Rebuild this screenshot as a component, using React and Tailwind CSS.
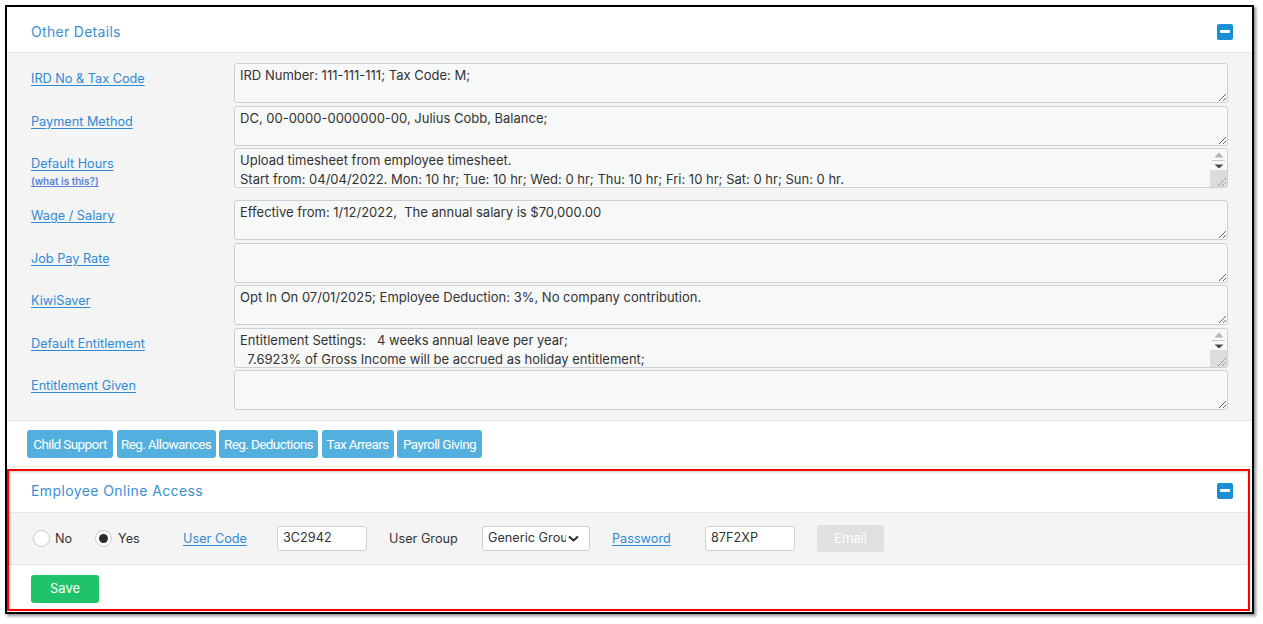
import React from "react";

const font = { fontFamily: "Inter, 'Noto Sans', sans-serif" };

function MinusBox() {
  return (
    <div className="w-[16px] h-[16px] rounded-[2px] bg-[#1b8fd6] flex items-center justify-center">
      <div className="w-[10px] h-[3px] bg-white rounded-[1px]" />
    </div>
  );
}

function FakeScroll() {
  return (
    <div className="absolute right-[1px] top-[1px] bottom-[1px] w-[17px] bg-[#f7f8f8] rounded-tr-[2px] rounded-br-[2px] flex flex-col items-center pointer-events-none">
      <svg width="10" height="6" viewBox="0 0 10 6" className="mt-[3px]">
        <polygon points="5,0.5 9.5,5.5 0.5,5.5" fill="#b3b3b3" />
      </svg>
      <div className="mt-[2px] w-[13px] h-[1px] bg-[#c9c9c9]" />
      <svg width="10" height="5" viewBox="0 0 10 5" className="mt-[3px]">
        <polygon points="0.5,0.5 9.5,0.5 5,4.5" fill="#4a4a4a" />
      </svg>
      <div className="mt-auto w-[17px] h-[17px] bg-[#dcdcdc] flex items-end justify-end">
        <svg width="12" height="12" viewBox="0 0 12 12">
          <line x1="3" y1="11" x2="11" y2="3" stroke="#555" strokeWidth="0.9" strokeDasharray="1 1" />
          <line x1="7" y1="11" x2="11" y2="7" stroke="#555" strokeWidth="0.9" strokeDasharray="1 1" />
        </svg>
      </div>
    </div>
  );
}

function Row({ label, sub, value, extra = "", scroll = false }) {
  return (
    <div className={`flex ${extra}`}>
      <div className="w-[203px] shrink-0 pt-[7px] text-[12.7px] leading-[17px]">
        <a className="block w-fit text-[#2f8ad6] underline underline-offset-2 cursor-pointer">{label}</a>
        {sub && (
          <div className="w-fit mt-[3px] text-[10px] leading-[12px] font-semibold text-[#5a82d6] underline underline-offset-1">{sub}</div>
        )}
      </div>
      <div className="relative flex-1 h-[40px]">
        <textarea
          readOnly
          defaultValue={value}
          className="block w-full h-[40px] border border-[#cdd1d6] rounded-[3px] bg-[#f7f8f8] text-[13px] leading-[19px] text-[#333] px-[5px] pt-[2px] outline-none overflow-hidden"
          style={font}
        />
        {scroll && <FakeScroll />}
      </div>
    </div>
  );
}

const buttons = [
  ["Child Support", "w-[86px]"],
  ["Reg. Allowances", "w-[99px]"],
  ["Reg. Deductions", "w-[99px]"],
  ["Tax Arrears", "w-[72px]"],
  ["Payroll Giving", "w-[85px]"],
];

export default function App() {
  return (
    <div className="w-[1263px] h-[624px] bg-white overflow-hidden" style={font}>
      <div className="ml-[5px] mt-[5px] w-[1249px] h-[609px] border-2 border-black bg-white shadow-[2px_2px_3px_rgba(0,0,0,0.45)] flex flex-col">
        {/* Other Details header */}
        <div className="h-[46px] shrink-0 flex items-center justify-between pl-6 pr-[19px] pt-[4px] border-b border-[#e6e6e6]">
          <span className="text-[14px] tracking-[0.3px] text-[#3a8fd3]">Other Details</span>
          <MinusBox />
        </div>
        {/* gray body */}
        <div className="bg-[#f4f4f4] pl-6 pr-6 pt-[10px] pb-[10px] flex flex-col gap-[2.5px] border-b border-[#e6e6e6]">
          <Row label="IRD No & Tax Code" value="IRD Number: 111-111-111; Tax Code: M;" />
          <Row label="Payment Method" value="DC, 00-0000-0000000-00, Julius Cobb, Balance;" />
          <Row
            label="Default Hours"
            sub="(what is this?)"
            extra="mb-[9.5px]"
            scroll
            value={"Upload timesheet from employee timesheet.\nStart from: 04/04/2022. Mon: 10 hr; Tue: 10 hr; Wed: 0 hr; Thu: 10 hr; Fri: 10 hr; Sat: 0 hr; Sun: 0 hr.\n"}
          />
          <Row label="Wage / Salary" value="Effective from: 1/12/2022,  The annual salary is $70,000.00" />
          <Row label="Job Pay Rate" value="" />
          <Row label="KiwiSaver" value="Opt In On 07/01/2025; Employee Deduction: 3%, No company contribution." />
          <Row
            label="Default Entitlement"
            scroll
            value={"Entitlement Settings:   4 weeks annual leave per year;\n  7.6923% of Gross Income will be accrued as holiday entitlement;\n"}
          />
          <Row label="Entitlement Given" value="" />
        </div>
        {/* buttons */}
        <div className="h-[46px] shrink-0 flex items-start gap-[3.5px] pl-[20px] pt-[9px] border-b border-[#e8e8e8]">
          {buttons.map(([t, w]) => (
            <button
              key={t}
              className={`${w} h-[28px] rounded-[3px] bg-[#53b0de] text-white text-[13.5px] tracking-[-0.6px] whitespace-nowrap`}
              style={{ fontFamily: "Roboto, 'Noto Sans', sans-serif" }}
            >
              {t}
            </button>
          ))}
        </div>
        {/* Employee Online Access */}
        <div className="relative flex-1 flex flex-col mt-[2px]">
          <div className="h-[44px] shrink-0 flex items-center justify-between pl-6 pr-[19px] border-b border-[#e6e6e6]">
            <span className="text-[14px] tracking-[0.4px] text-[#3a8fd3]">Employee Online Access</span>
            <MinusBox />
          </div>
          <div className="h-[52px] shrink-0 bg-[#f4f4f4] border-b border-[#e6e6e6] flex items-center pl-[26px] text-[12.7px] text-[#333]">
            <span className="shrink-0 w-[17px] h-[17px] rounded-full border border-[#c9c9c9] bg-white" />
            <span className="shrink-0 w-[45px] pl-[5px]">No</span>
            <span className="shrink-0 w-[17px] h-[17px] rounded-full border border-[#c9c9c9] bg-white flex items-center justify-center">
              <span className="w-[9px] h-[9px] rounded-full bg-[#2b2b2b]" />
            </span>
            <span className="shrink-0 w-[71px] pl-[6px]">Yes</span>
            <span className="shrink-0 w-[94px]">
              <a className="text-[#2f8ad6] underline underline-offset-2">User Code</a>
            </span>
            <div className="shrink-0 w-[90px] h-[25px] border border-[#cdd1d6] rounded-[3px] bg-white flex items-center px-[5px] -mt-[1px]">3C2942</div>
            <span className="shrink-0 ml-[22px] w-[93px]">User Group</span>
            <div className="shrink-0 w-[108px] h-[25px] border border-[#cdd1d6] rounded-[3px] bg-white flex items-center pl-[5px] pr-[9px] -mt-[1px]">
              <span className="whitespace-nowrap overflow-hidden w-[78px]">Generic Group</span>
              <svg width="11" height="7" viewBox="0 0 11 7" className="shrink-0 ml-[2px]">
                <polyline points="1,1.5 5.5,5.5 10,1.5" fill="none" stroke="#222" strokeWidth="1.8" />
              </svg>
            </div>
            <span className="shrink-0 ml-[22px] w-[93px]">
              <a className="text-[#2f8ad6] underline underline-offset-2">Password</a>
            </span>
            <div className="shrink-0 w-[90px] h-[25px] border border-[#cdd1d6] rounded-[3px] bg-white flex items-center px-[5px] -mt-[1px]">87F2XP</div>
            <button className="shrink-0 ml-[22px] w-[67px] h-[27px] rounded-[3px] bg-[#dfe0e1] text-white text-[13px]">Email</button>
          </div>
          <div className="pl-6 pt-[10px]">
            <button className="w-[68px] h-[28px] rounded-[3px] bg-[#1fc46a] text-white text-[13px]">Save</button>
          </div>
          <div className="absolute left-0 top-0 right-[2px] bottom-[1px] border-2 border-[#ff0000] pointer-events-none shadow-[inset_1px_1px_3px_rgba(0,0,0,0.2)]" />
        </div>
      </div>
    </div>
  );
}
